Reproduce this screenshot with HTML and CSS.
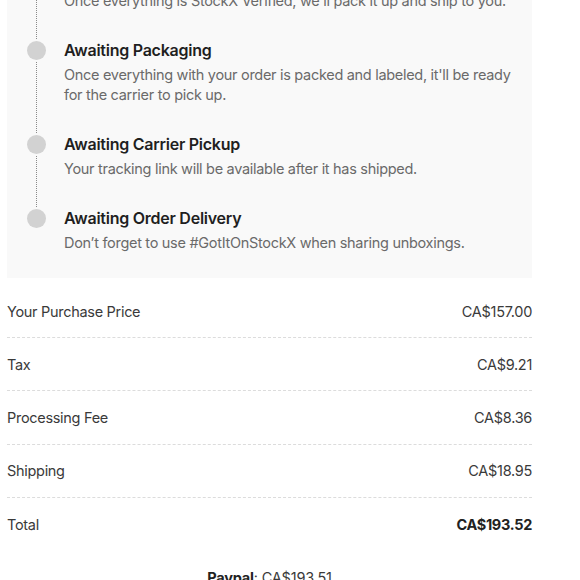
FILE: index.html
```html
<!DOCTYPE html>
<html lang="en">
<head>
<meta charset="utf-8">
<title>Order status</title>
<link rel="stylesheet" href="styles.css">
</head>
<body>
<div class="page">
  <section class="timeline">
    <div class="step">
      <span class="dot"></span>
      <div class="step-body">
        <h3 class="step-title">Shipping to StockX</h3>
        <p class="step-desc">Once everything is StockX Verified, we'll pack it up and ship to you.</p>
      </div>
    </div>
    <div class="step">
      <span class="dot"></span>
      <div class="step-body">
        <h3 class="step-title">Awaiting Packaging</h3>
        <p class="step-desc">Once everything with your order is packed and labeled, it'll be ready for the carrier to pick up.</p>
      </div>
    </div>
    <div class="step">
      <span class="dot"></span>
      <div class="step-body">
        <h3 class="step-title">Awaiting Carrier Pickup</h3>
        <p class="step-desc">Your tracking link will be available after it has shipped.</p>
      </div>
    </div>
    <div class="step">
      <span class="dot"></span>
      <div class="step-body">
        <h3 class="step-title">Awaiting Order Delivery</h3>
        <p class="step-desc">Don’t forget to use #GotItOnStockX when sharing unboxings.</p>
      </div>
    </div>
  </section>

  <section class="summary">
    <div class="row"><span>Your Purchase Price</span><span>CA$157.00</span></div>
    <div class="row"><span>Tax</span><span>CA$9.21</span></div>
    <div class="row"><span>Processing Fee</span><span>CA$8.36</span></div>
    <div class="row"><span>Shipping</span><span>CA$18.95</span></div>
    <div class="row total"><span>Total</span><span class="strong">CA$193.52</span></div>
  </section>

  <p class="payment"><b>Paypal</b>: CA$193.51</p>
</div>
</body>
</html>
```

FILE: styles.css
```css
* { box-sizing: border-box; }
html, body { margin: 0; padding: 0; background: #fff; }
body {
  font-family: Inter, "Noto Sans", sans-serif;
  -webkit-font-smoothing: antialiased;
}
.page {
  width: 525px;
  margin: -60px 0 0 7px;
}
.timeline {
  background: #f9f9f9;
  padding: 24px 10px 25px 20px;
  display: flex;
  flex-direction: column;
  gap: 27px;
}
.step {
  position: relative;
  display: flex;
  gap: 18px;
  align-items: flex-start;
}
.step:not(:last-child)::before {
  content: "";
  position: absolute;
  left: 9px;
  top: 12px;
  bottom: -40px;
  border-left: 1px dotted #8a8a8a;
}
.dot {
  position: relative;
  z-index: 1;
  flex: none;
  width: 19px;
  height: 19px;
  margin-top: 2.5px;
  border-radius: 50%;
  background: #d2d2d2;
  box-shadow: 0 0 0 2px #f9f9f9;
}
.step-body { flex: 1; }
.step-title {
  margin: 0;
  font-size: 16px;
  line-height: 24px;
  font-weight: 600;
  color: #1f1f1f;
  letter-spacing: -0.25px;
}
.step-desc {
  margin: 3px 0 0;
  font-size: 14.5px;
  line-height: 20px;
  color: #6a6a6a;
  letter-spacing: -0.3px;
}
.summary {
  margin-top: 7px;
}
.row {
  display: flex;
  justify-content: space-between;
  align-items: center;
  height: 53.2px;
  border-bottom: 1px dashed #dcdcdc;
  font-size: 14.5px;
  color: #3a3a3a;
  letter-spacing: -0.3px;
}
.row.total { border-bottom: none; }
.strong { font-weight: 700; color: #222; }
.payment {
  margin: 18px 0 0;
  text-align: center;
  font-size: 14.5px;
  color: #3a3a3a;
  letter-spacing: -0.2px;
}
.payment b { font-weight: 700; color: #222; }
```
